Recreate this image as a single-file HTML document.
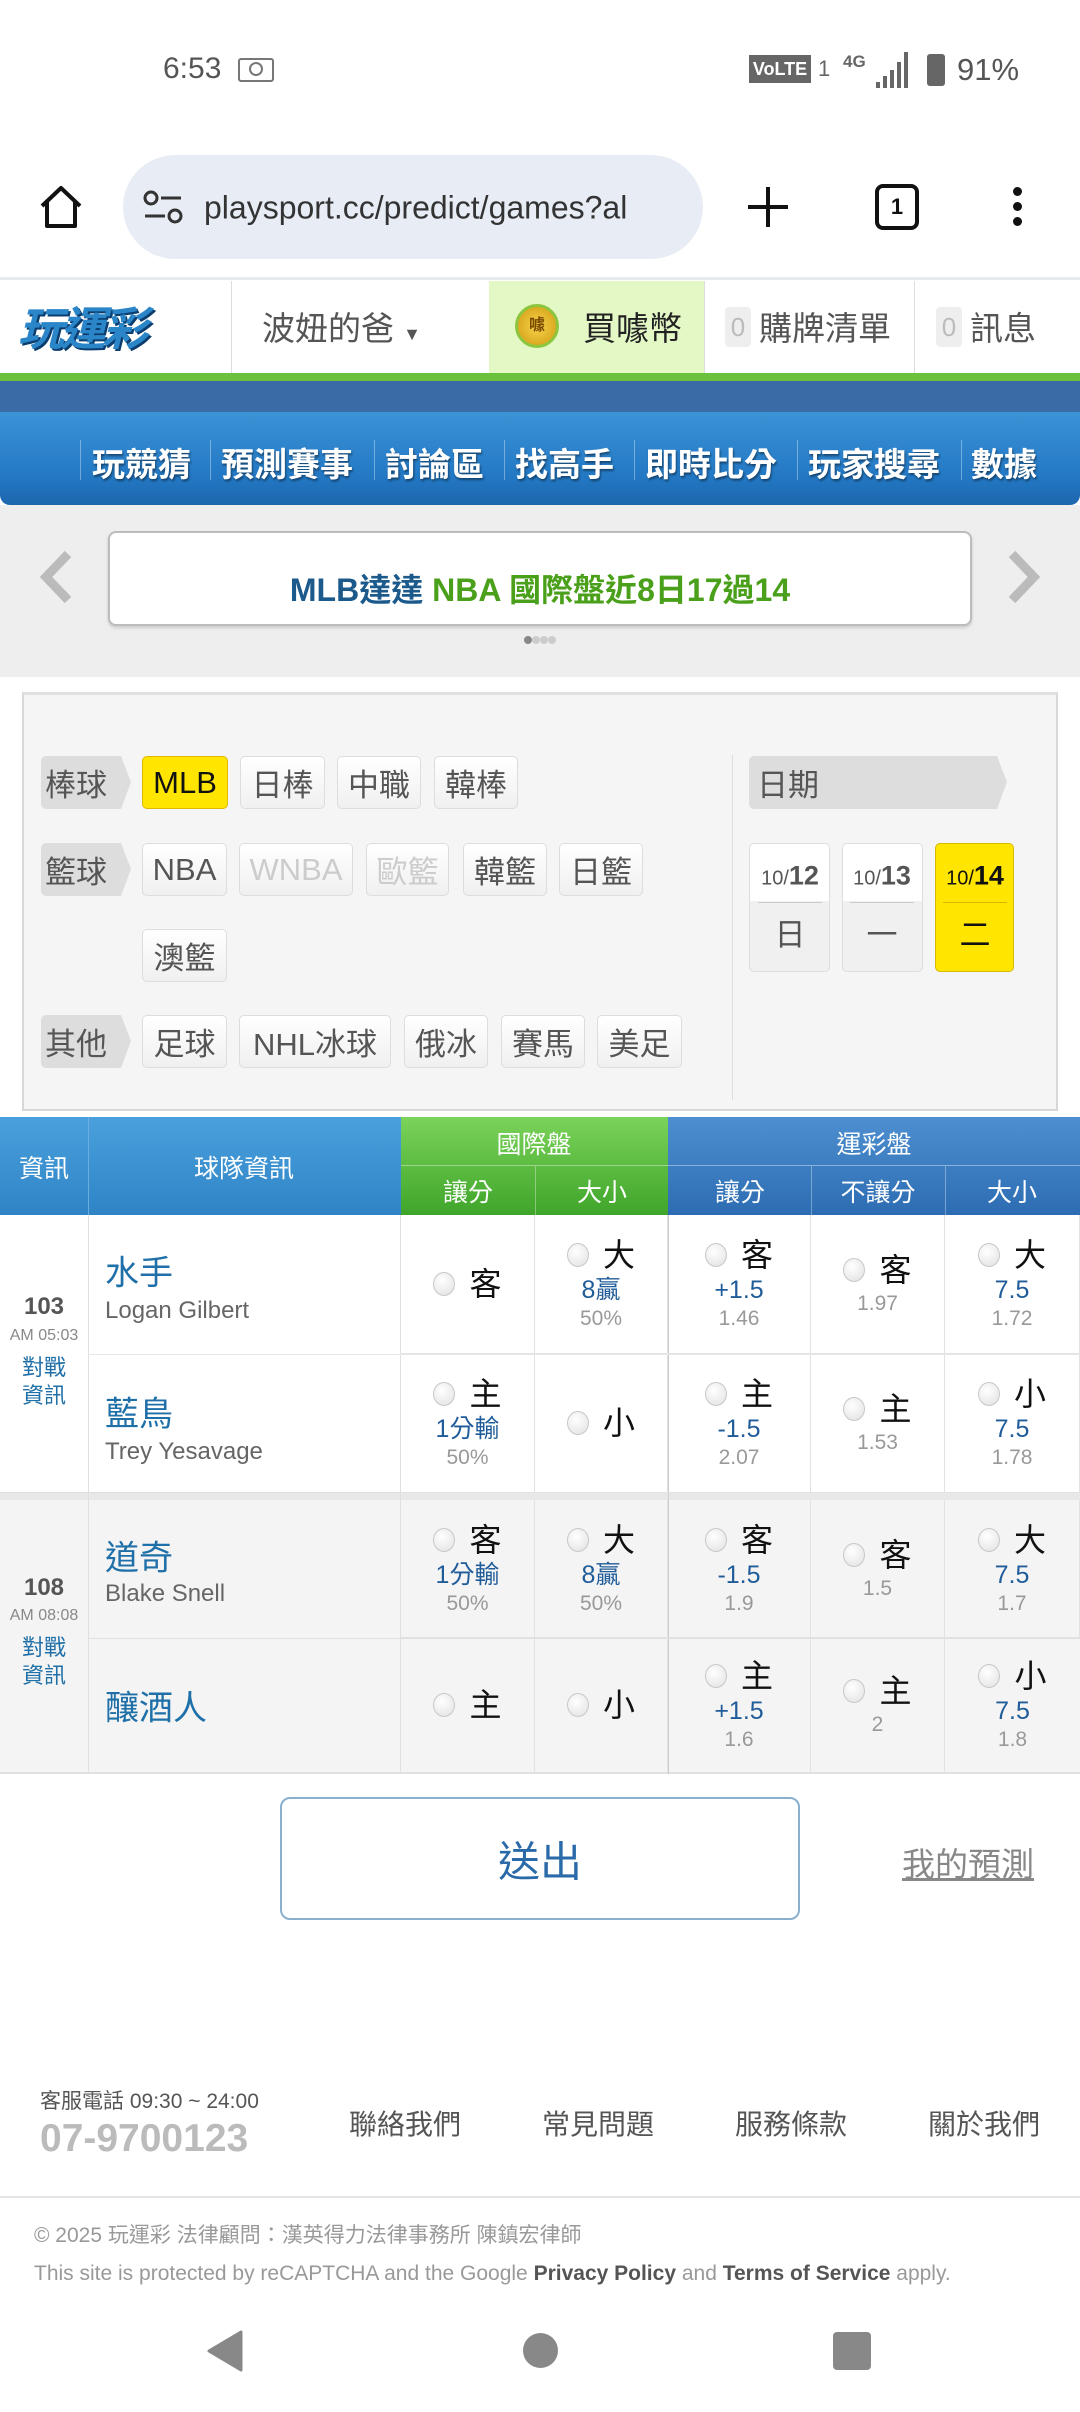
<!DOCTYPE html>
<html><head><meta charset="utf-8">
<style>
*{margin:0;padding:0;box-sizing:border-box}
body{width:1080px;height:2412px;position:relative;background:#fff;font-family:"Liberation Sans","Noto Sans CJK TC",sans-serif;overflow:hidden;color:#333}
.a{position:absolute}
.c{position:absolute;transform:translate(-50%,-50%);white-space:nowrap}
.l{position:absolute;transform:translateY(-50%);white-space:nowrap}
.pill{position:absolute;height:53px;border:1px solid #ddd;border-radius:5px;background:linear-gradient(#fff,#f0f0f0);font-size:31px;color:#555;display:flex;align-items:center;justify-content:center}
.lab{position:absolute;height:53px;background:#ddd;border-radius:5px 0 0 5px;font-size:31px;color:#555;display:flex;align-items:center;padding-left:4px;width:80px}
.lab:after{content:"";position:absolute;right:-10px;top:0;border-top:26px solid transparent;border-bottom:27px solid transparent;border-left:10px solid #ddd}
.cell{position:absolute;display:flex;flex-direction:column;align-items:center;justify-content:center;border-right:1px solid #e2e2e2;border-bottom:1px solid #e2e2e2}
.r{display:flex;align-items:center;font-size:32px;color:#111;line-height:40px}
.r i{display:inline-block;width:22px;height:24px;border-radius:50%;border:1px solid #c8c8c8;background:radial-gradient(circle at 40% 35%,#fff,#e0e0e0);margin-right:14px}
.b{font-size:25px;color:#1f5c99;line-height:30px}
.g{font-size:21px;color:#999;line-height:28px}
.nav span{position:absolute;top:438px;font-size:33px;color:#fff;font-weight:bold;text-shadow:1px 2px 2px rgba(0,0,0,.45)}
.sep{position:absolute;top:440px;width:1px;height:40px;background:rgba(255,255,255,.35)}
</style></head><body>
<!-- status bar -->
<div class="l" style="left:163px;top:69px;font-size:30px;color:#555">6:53</div>
<div class="a" style="left:238px;top:58px;width:36px;height:24px;border:2px solid #777;border-radius:3px"></div>
<div class="a" style="left:249px;top:62px;width:14px;height:14px;border:2px solid #777;border-radius:50%"></div>
<div class="a" style="left:749px;top:55px;width:62px;height:28px;background:#666;color:#fff;font-size:18px;font-weight:bold;text-align:center;line-height:28px">VoLTE</div>
<div class="l" style="left:818px;top:69px;font-size:22px;color:#666">1</div>
<div class="l" style="left:843px;top:62px;font-size:17px;color:#666;font-weight:bold">4G</div>
<svg class="a" style="left:874px;top:50px" width="38" height="40"><path d="M2 38h4v-6h-4zM9 38h4v-12h-4zM16 38h4v-18h-4zM23 38h4v-26h-4zM30 38h4v-36h-4z" fill="#666"/></svg>
<div class="a" style="left:927px;top:54px;width:18px;height:32px;background:#666;border-radius:3px"></div>
<div class="l" style="left:957px;top:70px;font-size:31px;color:#555">91%</div>
<!-- url bar -->
<svg class="a" style="left:38px;top:184px" width="46" height="46"><path d="M4 22L23 4l19 18M9 18v24h28V18" fill="none" stroke="#111" stroke-width="4" stroke-linejoin="round"/></svg>
<div class="a" style="left:123px;top:155px;width:580px;height:104px;border-radius:52px;background:#e8edf5"></div>
<svg class="a" style="left:143px;top:190px" width="40" height="36"><circle cx="8" cy="8" r="6" fill="none" stroke="#333" stroke-width="3"/><path d="M18 8h20M2 26h20" stroke="#333" stroke-width="3"/><circle cx="32" cy="26" r="6" fill="none" stroke="#333" stroke-width="3"/></svg>
<div class="l" style="left:204px;top:208px;font-size:32px;color:#333">playsport.cc/predict/games?al</div>
<svg class="a" style="left:746px;top:185px" width="44" height="44"><path d="M22 2v40M2 22h40" stroke="#111" stroke-width="4"/></svg>
<div class="a" style="left:875px;top:184px;width:44px;height:46px;border:4px solid #111;border-radius:8px;font-size:22px;font-weight:bold;text-align:center;line-height:38px;color:#111">1</div>
<div class="a" style="left:1013px;top:187px;width:9px;height:9px;border-radius:50%;background:#111;box-shadow:0 15px 0 #111,0 30px 0 #111"></div>
<div class="a" style="left:0;top:277px;width:1080px;height:3px;background:#e6ebf0"></div>
<!-- site header -->
<div class="a" style="left:0;top:281px;width:1080px;height:93px;background:#fff"></div>
<div class="l" style="left:18px;top:326px;font-size:46px;font-weight:bold;font-style:italic;color:#2a86c8;text-shadow:2px 2px 0 #0b3d6e,-1px -1px 0 #fff;letter-spacing:-4px">玩運彩</div>
<div class="a" style="left:231px;top:281px;width:1px;height:93px;background:#ddd"></div>
<div class="l" style="left:262px;top:326px;font-size:33px;color:#555">波妞的爸 <span style="font-size:18px">▼</span></div>
<div class="a" style="left:489px;top:281px;width:215px;height:93px;background:#e4f8c6"></div>
<div class="a" style="left:515px;top:304px;width:44px;height:44px;border-radius:50%;background:radial-gradient(#f5d34a,#d19a10);border:3px solid #8cc63f;font-size:16px;color:#7a4a00;text-align:center;line-height:38px;font-weight:bold">噱</div>
<div class="l" style="left:583px;top:326px;font-size:33px;color:#222">買噱幣</div>
<div class="a" style="left:704px;top:281px;width:1px;height:93px;background:#ddd"></div>
<div class="a" style="left:725px;top:307px;width:26px;height:40px;background:#eee;border-radius:4px;color:#bbb;font-size:26px;text-align:center;line-height:40px">0</div>
<div class="l" style="left:759px;top:326px;font-size:33px;color:#555">購牌清單</div>
<div class="a" style="left:914px;top:281px;width:1px;height:93px;background:#ddd"></div>
<div class="a" style="left:936px;top:307px;width:26px;height:40px;background:#eee;border-radius:4px;color:#bbb;font-size:26px;text-align:center;line-height:40px">0</div>
<div class="l" style="left:970px;top:326px;font-size:33px;color:#555">訊息</div>
<div class="a" style="left:0;top:373px;width:1080px;height:8px;background:#6cc13c"></div>
<!-- blue nav -->
<div class="a" style="left:0;top:381px;width:1080px;height:32px;background:#3a6ba6"></div>
<div class="a nav" style="left:0;top:412px;width:1080px;height:93px;background:linear-gradient(#3c93d6,#2378c4 70%,#1d66ad);border-radius:0 0 10px 10px"></div>
<div class="nav">
<div class="sep" style="left:80px"></div><span style="left:92px">玩競猜</span>
<div class="sep" style="left:210px"></div><span style="left:221px">預測賽事</span>
<div class="sep" style="left:374px"></div><span style="left:385px">討論區</span>
<div class="sep" style="left:504px"></div><span style="left:515px">找高手</span>
<div class="sep" style="left:634px"></div><span style="left:645px">即時比分</span>
<div class="sep" style="left:797px"></div><span style="left:808px">玩家搜尋</span>
<div class="sep" style="left:961px"></div><span style="left:971px">數據</span>
</div>
<!-- gray banner area -->
<div class="a" style="left:0;top:505px;width:1080px;height:172px;background:#eeeeee"></div>
<svg class="a" style="left:38px;top:550px" width="36" height="54"><path d="M30 4L8 27l22 23" fill="none" stroke="#bbb" stroke-width="9"/></svg>
<svg class="a" style="left:1006px;top:550px" width="36" height="54"><path d="M6 4l22 23L6 50" fill="none" stroke="#bbb" stroke-width="9"/></svg>
<div class="a" style="left:108px;top:531px;width:864px;height:95px;background:#fff;border:2px solid #bcbcbc;border-radius:8px;box-shadow:0 2px 3px rgba(0,0,0,.15)"></div>
<div class="c" style="left:540px;top:588px;font-size:32px;font-weight:bold"><span style="color:#1c5a8c">MLB達達 </span><span style="color:#4aa01a">NBA 國際盤近8日17過14</span></div>
<div class="a" style="left:524px;top:636px;width:8px;height:8px;border-radius:50%;background:#888;box-shadow:8px 0 0 #ccc,16px 0 0 #ccc,24px 0 0 #ccc"></div>
<!-- filter panel -->
<div class="a" style="left:22px;top:692px;width:1036px;height:419px;background:#f5f5f5;border:2px solid #d8d8d8;border-top:3px solid #e0e0e0"></div>
<div class="lab" style="left:41px;top:756px">棒球</div>
<div class="pill" style="left:142px;top:756px;width:86px;background:#ffe500;border-color:#e0b800;color:#111">MLB</div>
<div class="pill" style="left:240px;top:756px;width:85px">日棒</div>
<div class="pill" style="left:337px;top:756px;width:84px">中職</div>
<div class="pill" style="left:434px;top:756px;width:84px">韓棒</div>
<div class="lab" style="left:41px;top:843px">籃球</div>
<div class="pill" style="left:142px;top:843px;width:85px">NBA</div>
<div class="pill" style="left:239px;top:843px;width:114px;color:#ccc">WNBA</div>
<div class="pill" style="left:366px;top:843px;width:83px;color:#ccc">歐籃</div>
<div class="pill" style="left:463px;top:843px;width:84px">韓籃</div>
<div class="pill" style="left:559px;top:843px;width:84px">日籃</div>
<div class="pill" style="left:142px;top:929px;width:85px">澳籃</div>
<div class="lab" style="left:41px;top:1015px">其他</div>
<div class="pill" style="left:142px;top:1015px;width:85px">足球</div>
<div class="pill" style="left:239px;top:1015px;width:152px">NHL冰球</div>
<div class="pill" style="left:404px;top:1015px;width:84px">俄冰</div>
<div class="pill" style="left:501px;top:1015px;width:84px">賽馬</div>
<div class="pill" style="left:597px;top:1015px;width:85px">美足</div>
<div class="a" style="left:732px;top:755px;width:1px;height:345px;background:#ddd"></div>
<div class="lab" style="left:749px;top:756px;width:248px;padding-left:8px;border-radius:5px 0 0 5px">日期</div>
<div class="a" style="left:749px;top:843px;width:81px;height:129px;border:1px solid #ddd;border-radius:5px;background:linear-gradient(#fff 45%,#f0f0f0 45%)"></div>
<div class="a" style="left:842px;top:843px;width:81px;height:129px;border:1px solid #ddd;border-radius:5px;background:linear-gradient(#fff 45%,#f0f0f0 45%)"></div>
<div class="a" style="left:935px;top:843px;width:79px;height:129px;border:1px solid #d8b800;border-radius:5px;background:#ffe500"></div>
<div class="c" style="left:790px;top:876px;font-size:20px;color:#555">10/<b style="font-size:27px">12</b></div>
<div class="c" style="left:882px;top:876px;font-size:20px;color:#555">10/<b style="font-size:27px">13</b></div>
<div class="c" style="left:975px;top:876px;font-size:20px;color:#111">10/<b style="font-size:27px">14</b></div>
<div class="a" style="left:758px;top:902px;width:64px;height:1px;background:#ccc"></div>
<div class="a" style="left:850px;top:902px;width:64px;height:1px;background:#ccc"></div>
<div class="a" style="left:943px;top:902px;width:64px;height:1px;background:#d8b800"></div>
<div class="c" style="left:790px;top:932px;font-size:31px;color:#555">日</div>
<div class="c" style="left:882px;top:932px;font-size:31px;color:#555">一</div>
<div class="c" style="left:975px;top:932px;font-size:31px;color:#111">二</div>
<!-- table header -->
<div class="a" style="left:0;top:1117px;width:401px;height:98px;background:linear-gradient(#4aa0dc,#2f84c6)"></div>
<div class="a" style="left:88px;top:1117px;width:1px;height:98px;background:#6aaee0"></div>
<div class="a" style="left:401px;top:1117px;width:267px;height:98px;background:linear-gradient(#7bd35a,#3fa52a)"></div>
<div class="a" style="left:668px;top:1117px;width:412px;height:98px;background:linear-gradient(#4d8fd0,#2d6cb2)"></div>
<div class="a" style="left:401px;top:1165px;width:679px;height:1px;background:rgba(255,255,255,.4)"></div>
<div class="a" style="left:535px;top:1166px;width:1px;height:49px;background:rgba(255,255,255,.35)"></div>
<div class="a" style="left:811px;top:1166px;width:1px;height:49px;background:rgba(255,255,255,.35)"></div>
<div class="a" style="left:945px;top:1166px;width:1px;height:49px;background:rgba(255,255,255,.35)"></div>
<div class="c" style="left:44px;top:1167px;font-size:25px;color:#fff">資訊</div>
<div class="c" style="left:244px;top:1167px;font-size:25px;color:#fff">球隊資訊</div>
<div class="c" style="left:534px;top:1143px;font-size:25px;color:#fff">國際盤</div>
<div class="c" style="left:874px;top:1143px;font-size:25px;color:#fff">運彩盤</div>
<div class="c" style="left:468px;top:1191px;font-size:25px;color:#fff">讓分</div>
<div class="c" style="left:602px;top:1191px;font-size:25px;color:#fff">大小</div>
<div class="c" style="left:740px;top:1191px;font-size:25px;color:#fff">讓分</div>
<div class="c" style="left:878px;top:1191px;font-size:25px;color:#fff">不讓分</div>
<div class="c" style="left:1012px;top:1191px;font-size:25px;color:#fff">大小</div>
<!-- game 1 -->
<div class="a" style="left:0;top:1215px;width:1080px;height:278px;background:#fff;border-bottom:1px solid #ddd"></div>
<div class="a" style="left:0;top:1493px;width:1080px;height:7px;background:#e8e8e8"></div>
<div class="a" style="left:0;top:1500px;width:1080px;height:274px;background:#f4f4f4;border-bottom:2px solid #e0e0e0"></div>
<div class="a" style="left:88px;top:1215px;width:1px;height:559px;background:#e0e0e0"></div>
<div class="a" style="left:400px;top:1215px;width:1px;height:559px;background:#e0e0e0"></div>
<div class="a" style="left:668px;top:1215px;width:1px;height:559px;background:#ccc"></div>
<div class="c" style="left:44px;top:1307px;font-size:24px;color:#555;font-weight:bold">103</div>
<div class="c" style="left:44px;top:1336px;font-size:16px;color:#888">AM 05:03</div>
<div class="c" style="left:44px;top:1382px;font-size:22px;color:#1f6fa8;line-height:28px;text-align:center">對戰<br>資訊</div>
<div class="l" style="left:105px;top:1270px;font-size:34px;color:#1f6fa8">水手</div>
<div class="l" style="left:105px;top:1311px;font-size:24px;color:#666">Logan Gilbert</div>
<div class="l" style="left:105px;top:1411px;font-size:34px;color:#1f6fa8">藍鳥</div>
<div class="l" style="left:105px;top:1452px;font-size:24px;color:#666">Trey Yesavage</div>
<div class="c" style="left:44px;top:1588px;font-size:24px;color:#555;font-weight:bold">108</div>
<div class="c" style="left:44px;top:1616px;font-size:16px;color:#888">AM 08:08</div>
<div class="c" style="left:44px;top:1662px;font-size:22px;color:#1f6fa8;line-height:28px;text-align:center">對戰<br>資訊</div>
<div class="l" style="left:105px;top:1555px;font-size:34px;color:#1f6fa8">道奇</div>
<div class="l" style="left:105px;top:1594px;font-size:24px;color:#666">Blake Snell</div>
<div class="l" style="left:105px;top:1705px;font-size:34px;color:#1f6fa8">釀酒人</div>
<!-- row1 cells -->
<div class="cell" style="left:401px;top:1215px;width:134px;height:139px"><div class="r"><i></i>客</div></div>
<div class="cell" style="left:535px;top:1215px;width:133px;height:139px"><div class="r"><i></i>大</div><div class="b">8贏</div><div class="g">50%</div></div>
<div class="cell" style="left:668px;top:1215px;width:143px;height:139px"><div class="r"><i></i>客</div><div class="b">+1.5</div><div class="g">1.46</div></div>
<div class="cell" style="left:811px;top:1215px;width:134px;height:139px"><div class="r"><i></i>客</div><div class="g">1.97</div></div>
<div class="cell" style="left:945px;top:1215px;width:135px;height:139px"><div class="r"><i></i>大</div><div class="b">7.5</div><div class="g">1.72</div></div>
<!-- row2 -->
<div class="cell" style="left:401px;top:1354px;width:134px;height:139px"><div class="r"><i></i>主</div><div class="b">1分輸</div><div class="g">50%</div></div>
<div class="cell" style="left:535px;top:1354px;width:133px;height:139px"><div class="r"><i></i>小</div></div>
<div class="cell" style="left:668px;top:1354px;width:143px;height:139px"><div class="r"><i></i>主</div><div class="b">-1.5</div><div class="g">2.07</div></div>
<div class="cell" style="left:811px;top:1354px;width:134px;height:139px"><div class="r"><i></i>主</div><div class="g">1.53</div></div>
<div class="cell" style="left:945px;top:1354px;width:135px;height:139px"><div class="r"><i></i>小</div><div class="b">7.5</div><div class="g">1.78</div></div>
<!-- row3 -->
<div class="cell" style="left:401px;top:1500px;width:134px;height:138px"><div class="r"><i></i>客</div><div class="b">1分輸</div><div class="g">50%</div></div>
<div class="cell" style="left:535px;top:1500px;width:133px;height:138px"><div class="r"><i></i>大</div><div class="b">8贏</div><div class="g">50%</div></div>
<div class="cell" style="left:668px;top:1500px;width:143px;height:138px"><div class="r"><i></i>客</div><div class="b">-1.5</div><div class="g">1.9</div></div>
<div class="cell" style="left:811px;top:1500px;width:134px;height:138px"><div class="r"><i></i>客</div><div class="g">1.5</div></div>
<div class="cell" style="left:945px;top:1500px;width:135px;height:138px"><div class="r"><i></i>大</div><div class="b">7.5</div><div class="g">1.7</div></div>
<!-- row4 -->
<div class="cell" style="left:401px;top:1638px;width:134px;height:134px;border-bottom:none"><div class="r"><i></i>主</div></div>
<div class="cell" style="left:535px;top:1638px;width:133px;height:134px;border-bottom:none"><div class="r"><i></i>小</div></div>
<div class="cell" style="left:668px;top:1638px;width:143px;height:134px;border-bottom:none"><div class="r"><i></i>主</div><div class="b">+1.5</div><div class="g">1.6</div></div>
<div class="cell" style="left:811px;top:1638px;width:134px;height:134px;border-bottom:none"><div class="r"><i></i>主</div><div class="g">2</div></div>
<div class="cell" style="left:945px;top:1638px;width:135px;height:134px;border-bottom:none;border-right:none"><div class="r"><i></i>小</div><div class="b">7.5</div><div class="g">1.8</div></div>
<div class="a" style="left:88px;top:1638px;width:992px;height:1px;background:#e0e0e0"></div>
<div class="a" style="left:88px;top:1354px;width:992px;height:1px;background:#e8e8e8"></div>
<!-- submit -->
<div class="a" style="left:280px;top:1797px;width:520px;height:123px;border:2px solid #8ab0d0;border-radius:10px;background:#fff"></div>
<div class="c" style="left:540px;top:1859px;font-size:42px;color:#2a6aa8">送出</div>
<div class="c" style="left:968px;top:1862px;font-size:33px;color:#888;text-decoration:underline">我的預測</div>
<!-- footer -->
<div class="l" style="left:40px;top:2100px;font-size:21px;color:#555">客服電話 09:30 ~ 24:00</div>
<div class="l" style="left:40px;top:2139px;font-size:39px;color:#bbb;font-weight:bold">07-9700123</div>
<div class="c" style="left:405px;top:2123px;font-size:28px;color:#555">聯絡我們</div>
<div class="c" style="left:598px;top:2123px;font-size:28px;color:#555">常見問題</div>
<div class="c" style="left:791px;top:2123px;font-size:28px;color:#555">服務條款</div>
<div class="c" style="left:984px;top:2123px;font-size:28px;color:#555">關於我們</div>
<div class="a" style="left:0;top:2196px;width:1080px;height:2px;background:#e4e4e4"></div>
<div class="l" style="left:34px;top:2234px;font-size:21px;color:#999">© 2025 玩運彩 法律顧問：漢英得力法律事務所 陳鎮宏律師</div>
<div class="l" style="left:34px;top:2274px;font-size:21px;color:#999">This site is protected by reCAPTCHA and the Google <b style="color:#555">Privacy Policy</b> and <b style="color:#555">Terms of Service</b> apply.</div>
<!-- nav bar -->
<svg class="a" style="left:205px;top:2330px" width="40" height="42"><path d="M36 2L4 21l32 19z" fill="#888" stroke="#888" stroke-width="3" stroke-linejoin="round"/></svg>
<div class="a" style="left:523px;top:2333px;width:35px;height:35px;border-radius:50%;background:#888"></div>
<div class="a" style="left:833px;top:2332px;width:38px;height:38px;border-radius:4px;background:#888"></div>
</body></html>
